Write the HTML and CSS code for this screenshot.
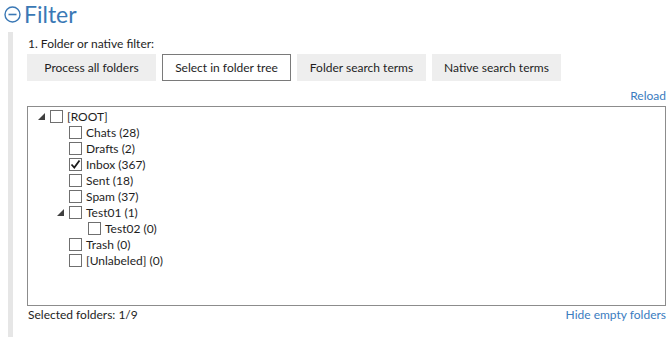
FILE: index.html
```html
<!DOCTYPE html>
<html lang="en">
<head>
    <meta charset="UTF-8">
    <title>Filter</title>
    <link rel="stylesheet" href="styles.css">
</head>
<body>
    <div class="section-head">
        <svg class="collapse-icon" width="17" height="17" viewBox="0 0 17 17">
            <circle cx="8.5" cy="8.5" r="7.5" fill="none" stroke="#3a78b5" stroke-width="1.4"/>
            <line x1="4.5" y1="8.5" x2="12.5" y2="8.5" stroke="#3a78b5" stroke-width="1.6"/>
        </svg>
        <h1>Filter</h1>
    </div>

    <div class="section-body">
        <div class="field-label">1. Folder or native filter:</div>
        <div class="btn-row">
            <button class="mode-btn">Process all folders</button>
            <button class="mode-btn active">Select in folder tree</button>
            <button class="mode-btn">Folder search terms</button>
            <button class="mode-btn">Native search terms</button>
        </div>

        <div class="link-row"><a class="link">Reload</a></div>

        <div class="tree">
            <div class="node">
                <span class="expander"><svg width="7" height="7" viewBox="0 0 7 7"><polygon points="7,0 7,7 0,7" fill="#404040"/></svg></span>
                <span class="check"></span>
                <span class="name">[ROOT]</span>
            </div>
            <div class="children">
                <div class="node"><span class="expander"></span><span class="check"></span><span class="name">Chats (28)</span></div>
                <div class="node"><span class="expander"></span><span class="check"></span><span class="name">Drafts (2)</span></div>
                <div class="node">
                    <span class="expander"></span>
                    <span class="check checked"><svg width="11" height="11" viewBox="0 0 11 11"><polyline points="1.5,5.5 4.3,8.5 9.5,1.5" fill="none" stroke="#1a1a1a" stroke-width="1.8"/></svg></span>
                    <span class="name">Inbox (367)</span>
                </div>
                <div class="node"><span class="expander"></span><span class="check"></span><span class="name">Sent (18)</span></div>
                <div class="node"><span class="expander"></span><span class="check"></span><span class="name">Spam (37)</span></div>
                <div class="node">
                    <span class="expander"><svg width="7" height="7" viewBox="0 0 7 7"><polygon points="7,0 7,7 0,7" fill="#404040"/></svg></span>
                    <span class="check"></span>
                    <span class="name">Test01 (1)</span>
                </div>
                <div class="children">
                    <div class="node"><span class="expander"></span><span class="check"></span><span class="name">Test02 (0)</span></div>
                </div>
                <div class="node"><span class="expander"></span><span class="check"></span><span class="name">Trash (0)</span></div>
                <div class="node"><span class="expander"></span><span class="check"></span><span class="name">[Unlabeled] (0)</span></div>
            </div>
        </div>

        <div class="tree-footer">
            <span>Selected folders: 1/9</span>
            <a class="link">Hide empty folders</a>
        </div>
    </div>
</body>
</html>
```

FILE: styles.css
```css
:root {
    --text-color: #1e1e1e;
    --link-color: #3a7cc0;
    --head-color: #3a78b5;
    --btn-bg: #eeeeee;
    --rail-color: #e6e6e6;
}

* {
    margin: 0;
    padding: 0;
    box-sizing: border-box;
}

body {
    font-family: "Segoe UI", Lato, "Noto Sans", sans-serif;
    font-size: 12px;
    color: var(--text-color);
    background: #fff;
    width: 670px;
    height: 337px;
    overflow: hidden;
}

.section-head {
    display: flex;
    align-items: center;
    gap: 3px;
    padding: 0 0 0 4px;
    height: 28px;
}

.collapse-icon {
    margin-top: 1px;
}

h1 {
    font-size: 23px;
    font-weight: normal;
    color: var(--head-color);
    line-height: 26px;
}

.section-body {
    margin: 4px 4px 0 8px;
    padding: 3px 0 20px 14px;
    border-left: 5px solid var(--rail-color);
}

.field-label {
    height: 17px;
    line-height: 17px;
    padding-left: 1px;
}

.btn-row {
    display: flex;
    gap: 6px;
    margin-top: 2px;
}

.mode-btn {
    width: 129px;
    height: 27px;
    background: var(--btn-bg);
    border: 1px solid var(--btn-bg);
    font-family: inherit;
    font-size: 12px;
    color: var(--text-color);
}

.mode-btn.active {
    background: #fff;
    border-color: #7a7a7a;
}

.link-row {
    text-align: right;
    height: 25px;
    line-height: 16px;
    padding-top: 7px;
}

.link {
    color: var(--link-color);
    cursor: pointer;
}

.tree {
    height: 200px;
    border: 1px solid #8c8c8c;
    padding: 1px 0 0 5px;
}

.children {
    padding-left: 19px;
}

.node {
    display: flex;
    align-items: center;
    height: 16px;
}

.expander {
    width: 17px;
    height: 16px;
    display: flex;
    align-items: center;
    justify-content: center;
    padding-top: 1px;
}

.check {
    width: 13px;
    height: 13px;
    border: 1px solid #6f6f6f;
    background: #fff;
    display: flex;
    align-items: center;
    justify-content: center;
    margin-right: 4px;
}

.tree-footer {
    display: flex;
    justify-content: space-between;
    height: 18px;
    line-height: 16px;
    padding: 1px 0 0 1px;
}
```
